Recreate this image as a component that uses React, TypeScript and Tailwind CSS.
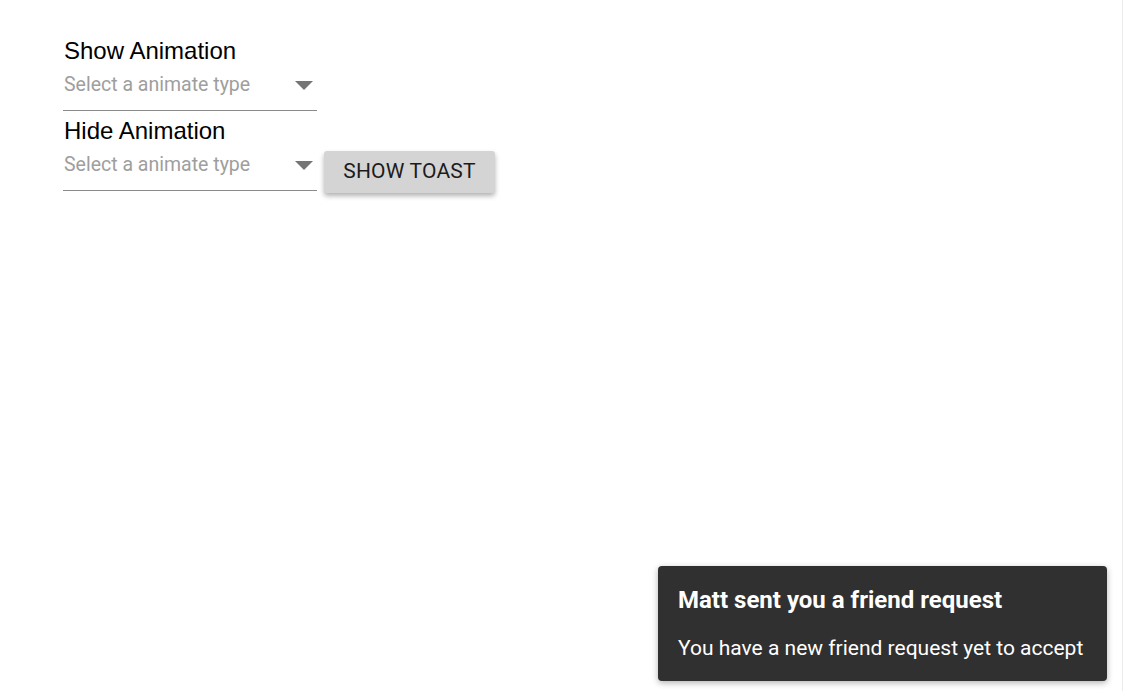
import React from 'react';

const Select: React.FC = () => {
  return (
    <div className="w-[254px] border-b border-[#8a8a8a] flex items-start justify-between h-[46px] pt-[8px]">
      <span className="text-[19.5px] leading-[24px] text-[#9e9e9e] pl-[1px] font-['Roboto',sans-serif]">Select a animate type</span>
      <svg width="18" height="9" viewBox="0 0 18 9" className="mr-[4px] mt-[8px]">
        <path d="M0 0 L18 0 L9 9 Z" fill="#757575" />
      </svg>
    </div>
  );
};

const App: React.FC = () => {
  return (
    <div className="relative w-full h-[691px] bg-white border-r border-[#ececec] overflow-hidden font-['Liberation_Sans',Arial,sans-serif]">
      <div className="pl-[63px] pt-[37px] flex flex-col">
        <label className="text-[24px] leading-[28px] text-black pl-[1px]">Show Animation</label>
        <Select />
        <label className="text-[24px] leading-[28px] text-black pl-[1px] mt-[6px]">Hide Animation</label>
        <div className="flex items-start gap-[7px]">
          <Select />
          <button className="mt-[6px] h-[42px] w-[171px] rounded-[3px] bg-[#d4d4d4] text-[21px] text-[#1c1c1c] font-['Roboto',sans-serif] tracking-[0.2px] shadow-[0_3px_5px_rgba(0,0,0,0.3)]">
            SHOW TOAST
          </button>
        </div>
      </div>

      <div className="absolute right-[15px] bottom-[10px] w-[449px] h-[115px] rounded-[4px] bg-[#303030] px-[20px] pt-[19px] shadow-[0_2px_6px_rgba(0,0,0,0.3)] font-['Roboto',sans-serif] text-white">
        <div className="text-[24px] font-bold leading-[30px]">Matt sent you a friend request</div>
        <div className="text-[21px] leading-[28px] mt-[19px]">You have a new friend request yet to accept</div>
      </div>
    </div>
  );
};

export default App;
